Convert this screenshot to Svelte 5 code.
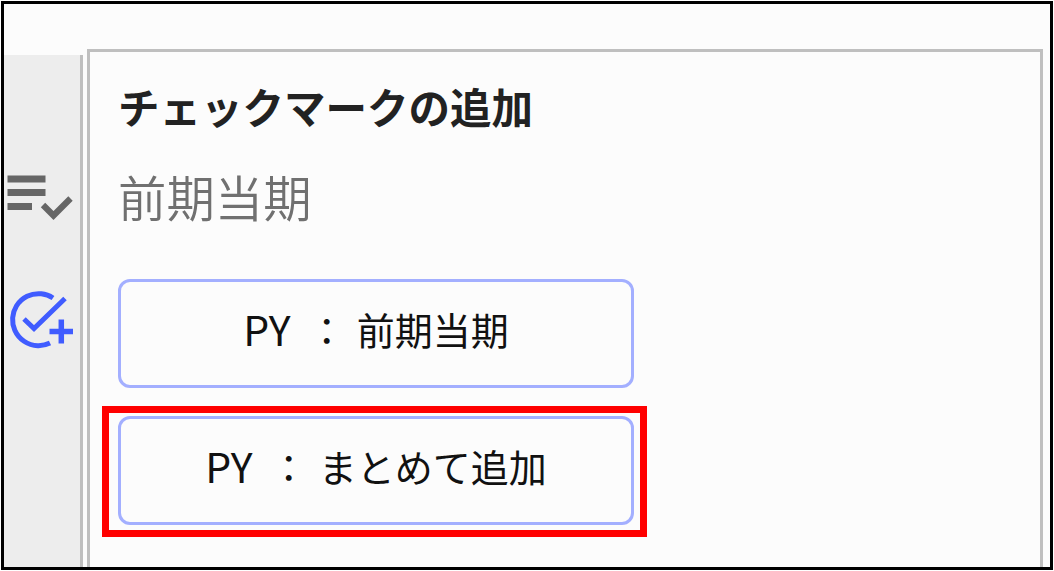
<script>
	const buttons = [
		{ code: 'PY', label: '前期当期', highlighted: false },
		{ code: 'PY', label: 'まとめて追加', highlighted: true }
	];
</script>

<div class="frame">
	<nav class="sidebar">
		<button class="tool" aria-label="チェックリスト">
			<svg width="72" height="60" viewBox="0 0 72 60" fill="none" stroke="#666" aria-hidden="true">
				<path d="M3.5 9h38M3.5 22.5h38M3.5 36.5h24.5" stroke-width="6.8"/>
				<path d="M39 35 49.5 45.5 66.5 28.5" stroke-width="6.2"/>
			</svg>
		</button>
		<button class="tool" aria-label="チェックマークの追加">
			<svg width="72" height="60" viewBox="0 0 72 60" fill="none" stroke="#405cff" stroke-width="5" aria-hidden="true">
				<path d="M49 8A26 26 0 1 0 46 53"/>
				<path d="M20 29 30 38.5 61 8.5"/>
				<path d="M45.5 41.5H69M57.3 29.5V53.5" stroke-width="5.5"/>
			</svg>
		</button>
	</nav>

	<main class="panel">
		<h1>チェックマークの追加</h1>
		<h2>前期当期</h2>
		<div class="list">
			{#each buttons as item}
				<div class="slot" class:highlighted={item.highlighted}>
					<button class="mark"><span class="code">{item.code}</span><span class="colon">：</span><span>{item.label}</span></button>
				</div>
			{/each}
		</div>
	</main>
</div>

<style>
	:global(body) {
		background: #fff;
	}

	.frame {
		box-sizing: border-box;
		display: flex;
		align-items: flex-end;
		gap: 4px;
		width: 1052px;
		height: 569px;
		margin: 1px;
		border: 3px solid #000;
		background: #fcfcfc;
		font-family: 'Noto Sans CJK JP', sans-serif;
		overflow: hidden;
	}

	button {
		font: inherit;
		padding: 0;
	}

	.sidebar {
		box-sizing: border-box;
		display: flex;
		flex-direction: column;
		gap: 60px;
		width: 79px;
		height: 512px;
		padding-top: 115px;
		border-right: 3px solid #bfbfbf;
		background: #ededed;
	}

	.tool {
		width: 72px;
		height: 60px;
		border: 0;
		background: none;
	}

	.tool svg {
		display: block;
	}

	.panel {
		box-sizing: border-box;
		width: 956px;
		height: 518px;
		padding: 23px 28px 0;
		border: 3px solid #bfbfbf;
		border-bottom: 0;
	}

	h1 {
		margin: 0;
		color: #222;
		font-size: 41.5px;
		font-weight: 700;
		line-height: 62px;
	}

	h2 {
		margin: 28px 0 0;
		color: #707070;
		font-size: 48.4px;
		font-weight: 350;
		line-height: 62px;
	}

	.list {
		display: flex;
		flex-direction: column;
		gap: 28px;
		margin-top: 52px;
	}

	.slot {
		position: relative;
		width: 516px;
		height: 109px;
	}

	.highlighted::after {
		content: '';
		position: absolute;
		inset: -10px -13px -12px -16px;
		border: 7px solid #f00;
		pointer-events: none;
	}

	.mark {
		box-sizing: border-box;
		display: flex;
		align-items: center;
		justify-content: center;
		width: 100%;
		height: 100%;
		padding-bottom: 11px;
		border: 3px solid #a3afff;
		border-radius: 12px;
		background: #fcfcfc;
		color: #111;
		font-size: 38px;
	}

	.code {
		font-size: 41px;
	}

	.colon {
		margin: 0 11px 0 17px;
	}
</style>
